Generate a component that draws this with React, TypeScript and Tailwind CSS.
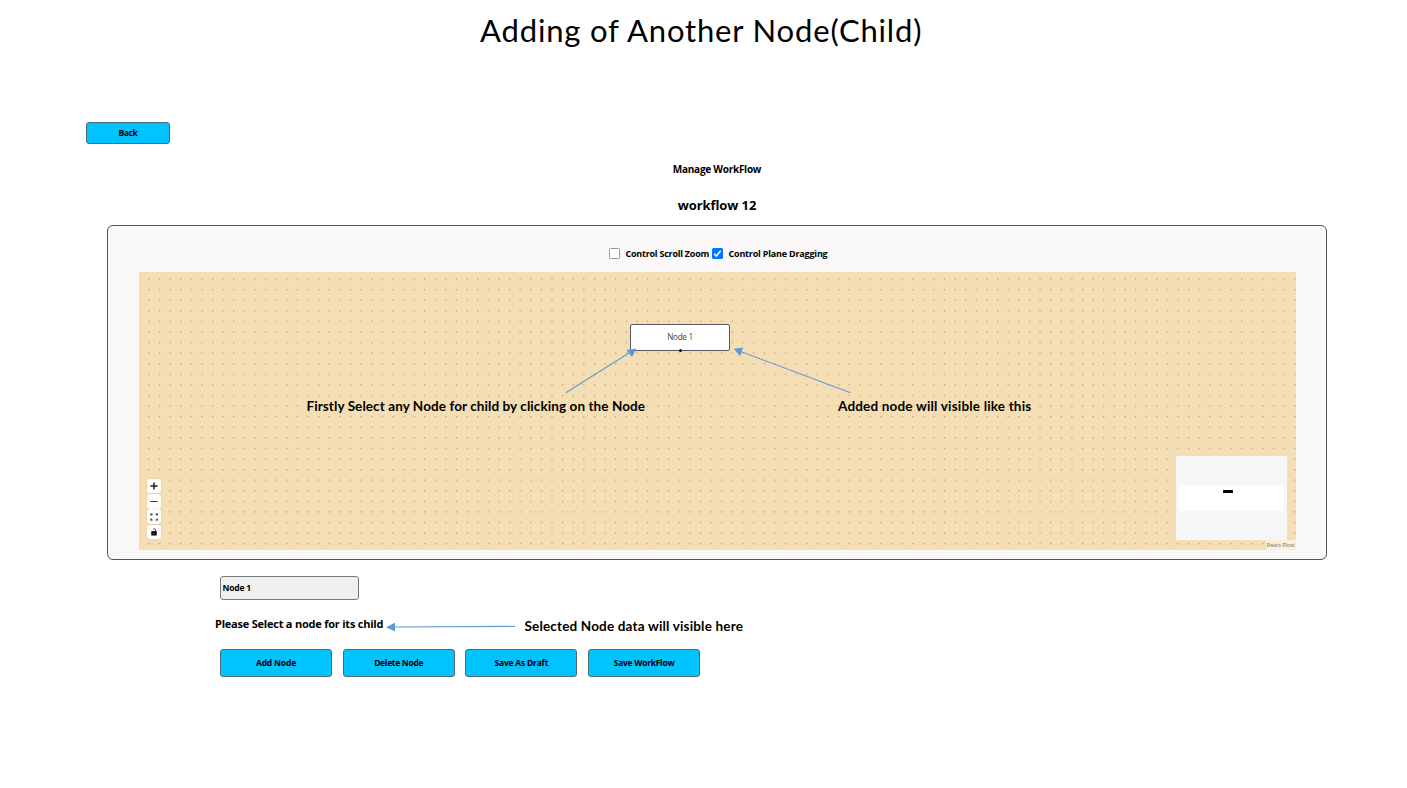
import type { ReactNode } from "react";

function ActionButton({ children, spacing }: { children: ReactNode; spacing: string }) {
  return (
    <button
      className={`h-[28px] w-[112px] rounded-[3px] border border-[#4f6a75] bg-[#00c3ff] text-[8.5px] leading-[26px] font-bold ${spacing}`}
    >
      {children}
    </button>
  );
}

function ControlButton({ children }: { children: ReactNode }) {
  return (
    <button className="flex h-[14.4px] w-[14px] items-center justify-center rounded-[3px] bg-[#fefefe] shadow-[0_0_1px_1px_rgba(0,0,0,0.04)]">
      <svg width="14" height="14" viewBox="0 0 14 14" fill="none" stroke="#222">
        {children}
      </svg>
    </button>
  );
}

function MiniMap() {
  return (
    <div className="absolute top-[184px] left-[1037.5px] h-[84px] w-[111px] bg-[#f4f6f8] px-[3px] pt-[29px]">
      <div className="h-[26px] w-[105px] bg-white pt-[5px] pl-[44px]">
        <div className="h-[2.5px] w-[10px] bg-black" />
      </div>
    </div>
  );
}

function FlowCanvas() {
  return (
    <div className="relative ml-[30.5px] h-[278px] w-[1157px] bg-[#f5deb3]">
      <svg className="block h-full w-full">
        <defs>
          <pattern id="dots" x="9.2" y="6.3" width="10.61" height="10.59" patternUnits="userSpaceOnUse">
            <rect x="0" y="0" width="1.3" height="1.3" fill="#a8946f" fillOpacity="0.85" />
          </pattern>
        </defs>
        <rect width="100%" height="100%" fill="url(#dots)" />
      </svg>

      <div className="absolute top-[51.5px] left-[491.5px] flex h-[27.5px] w-[100px] items-center justify-center rounded-[2px] border-[1.5px] border-[#5b5560] bg-white text-[8.2px] leading-none tracking-[-0.3px] text-[#444]">
        Node 1
        <span className="absolute -bottom-[2px] left-[48px] h-[3px] w-[3px] rounded-full bg-[#111]" />
      </div>

      <div className="absolute top-[207px] left-[8px] flex flex-col gap-[0.8px]">
        <ControlButton>
          <path d="M7 3.4v7.2M3.4 7h7.2" strokeWidth="1.5" />
        </ControlButton>
        <ControlButton>
          <path d="M3.3 7.5h7.4" strokeWidth="0.9" />
        </ControlButton>
        <ControlButton>
          <path d="M3.9 5.6V4.1h1.7M8.6 4.1h1.7v1.5M10.3 8.5V10H8.6M5.6 10H3.9V8.5" strokeWidth="1.1" />
        </ControlButton>
        <ControlButton>
          <path d="M4.3 6.1h5.4v4.4H4.3z" fill="#000" stroke="none" />
          <path d="M8.6 6.3V4.9a1.3 1.3 0 0 0-2.3-.6" strokeWidth="0.9" />
          <circle cx="7" cy="8.4" r="0.6" fill="#777" stroke="none" />
        </ControlButton>
      </div>

      <MiniMap />
      <div className="absolute right-0 bottom-0 h-[10px] w-[30px] bg-white/50 pt-[1px] text-center text-[5.5px] leading-[8px] whitespace-nowrap text-[#77716a]">
        React Flow
      </div>
    </div>
  );
}

function Annotations() {
  return (
    <div className="pointer-events-none absolute inset-0 font-[Lato,sans-serif] text-[13.5px] leading-[18px] font-bold whitespace-nowrap">
      <svg className="absolute inset-0" width="1407" height="788" stroke="#5b9bd5" strokeWidth="1.1" fill="none">
        <path d="M565.8 392.8L631 351.8M850.5 392.8L740 351.2M515 626.4L394 627" />
        <path
          d="M636.3 348.5L626.5 350L632 357.3ZM733.8 348.8L743.2 347.5L740 356.2ZM386 627.2L395 622.7V631.5Z"
          fill="#5b9bd5"
          stroke="none"
        />
      </svg>
      <span className="absolute top-[397px] left-[306.5px] tracking-[0.085px]">
        Firstly Select any Node for child by clicking on the Node
      </span>
      <span className="absolute top-[397px] left-[838px] tracking-[0.18px]">Added node will visible like this</span>
      <span className="absolute top-[617px] left-[524.5px] tracking-[0.17px]">Selected Node data will visible here</span>
    </div>
  );
}

export default function App() {
  return (
    <div className="relative h-[788px] w-[1407px] overflow-hidden bg-white font-['Open_Sans',sans-serif] text-black">
      <h1 className="h-[60px] pl-[480px] font-[Lato,sans-serif] text-[31px] leading-[60px] tracking-[0.84px] whitespace-nowrap">
        Adding of Another Node(Child)
      </h1>

      <button className="mt-[62px] ml-[86px] block h-[22px] w-[84px] rounded-[3px] border border-[#4f6a75] bg-[#00c3ff] text-[8.5px] leading-none font-bold tracking-[-0.4px]">
        Back
      </button>

      <main className="ml-[107px] w-[1220px]">
        <h2 className="mt-[17px] text-center text-[10px] leading-[16px] font-bold tracking-[-0.25px]">
          Manage WorkFlow
        </h2>
        <h3 className="mt-[18px] text-center text-[13px] leading-[20px] font-bold tracking-[-0.1px]">workflow 12</h3>

        <section className="mt-[10px] h-[335px] rounded-[6px] border border-[#555] bg-[#faf8f9]">
          <div className="flex h-[46px] items-center pt-[9px] pl-[500.5px] text-[9px] leading-none font-bold">
            <span className="h-[11px] w-[11px] rounded-[1.5px] border border-[#999] bg-white" />
            <label className="ml-[6px] w-[86px] tracking-[-0.24px] whitespace-nowrap">Control Scroll Zoom</label>
            <span className="flex h-[11px] w-[11px] items-center justify-center rounded-[1.5px] bg-[#0075ff]">
              <svg width="11" height="11" viewBox="0 0 11 11" fill="none" stroke="#fff" strokeWidth="1.5">
                <path d="M2.2 5.7L4.4 8L8.7 2.8" />
              </svg>
            </span>
            <label className="ml-[6px] tracking-[-0.2px] whitespace-nowrap">Control Plane Dragging</label>
          </div>
          <FlowCanvas />
        </section>

        <div className="pt-[16px] pl-[113px]">
          <div className="h-[24px] w-[139px] rounded-[3px] border border-[#777] bg-[#efefef] pl-[1.5px] text-[8.5px] leading-[22px] font-bold tracking-[-0.2px]">
            Node 1
          </div>
          <p className="mt-[15px] -ml-[5px] text-[11px] leading-[18px] font-bold tracking-[-0.22px]">
            Please Select a node for its child
          </p>
          <div className="mt-[16px] flex gap-[10.7px]">
            <ActionButton spacing="tracking-[-0.17px]">Add Node</ActionButton>
            <ActionButton spacing="tracking-[-0.3px]">Delete Node</ActionButton>
            <ActionButton spacing="tracking-[-0.22px]">Save As Draft</ActionButton>
            <ActionButton spacing="tracking-[-0.28px]">Save WorkFlow</ActionButton>
          </div>
        </div>
      </main>

      <Annotations />
    </div>
  );
}
